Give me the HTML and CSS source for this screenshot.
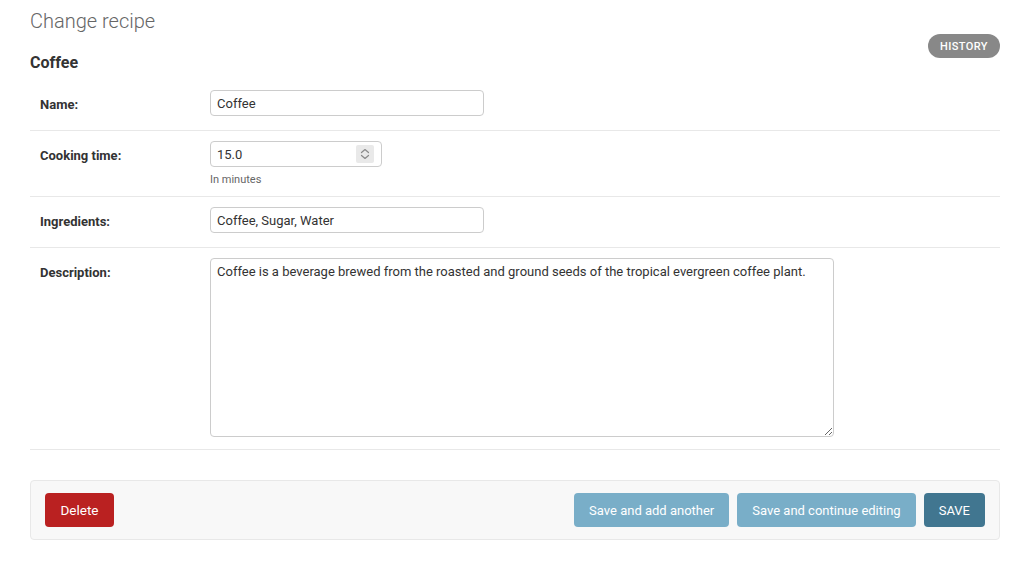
FILE: index.html
```html
<!DOCTYPE html>
<html lang="en">
<head>
<meta charset="utf-8">
<title>Change recipe</title>
<link rel="stylesheet" href="styles.css">
</head>
<body>
<div class="content">
  <h1 class="title">Change recipe</h1>
  <ul class="object-tools"><li><a href="#" class="historylink">History</a></li></ul>
  <h2 class="subtitle">Coffee</h2>
  <form class="form">
    <div class="fieldset">
      <div class="form-row">
        <label class="label">Name:</label>
        <div class="field">
          <input class="text-input" type="text" value="Coffee">
        </div>
      </div>
      <div class="form-row">
        <label class="label">Cooking time:</label>
        <div class="field">
          <div class="number-wrap">
            <input class="number-input" type="number" value="15.0" step="0.1">
            <span class="spinner" aria-hidden="true">
              <svg width="18" height="18" viewBox="0 0 18 18">
                <path d="M5.5 7.5 L9 4.5 L12.5 7.5" fill="none" stroke="#8a8a8a" stroke-width="1.2" stroke-linecap="round" stroke-linejoin="round"/>
                <path d="M5.5 10.5 L9 13.5 L12.5 10.5" fill="none" stroke="#8a8a8a" stroke-width="1.2" stroke-linecap="round" stroke-linejoin="round"/>
              </svg>
            </span>
          </div>
          <div class="help">In minutes</div>
        </div>
      </div>
      <div class="form-row">
        <label class="label">Ingredients:</label>
        <div class="field">
          <input class="text-input" type="text" value="Coffee, Sugar, Water">
        </div>
      </div>
      <div class="form-row">
        <label class="label">Description:</label>
        <div class="field">
          <textarea class="textarea">Coffee is a beverage brewed from the roasted and ground seeds of the tropical evergreen coffee plant.</textarea>
        </div>
      </div>
    </div>
    <div class="submit-row">
      <a href="#" class="btn btn-delete">Delete</a>
      <div class="spacer"></div>
      <button type="button" class="btn btn-light">Save and add another</button>
      <button type="button" class="btn btn-light">Save and continue editing</button>
      <button type="button" class="btn btn-default">SAVE</button>
    </div>
  </form>
</div>
</body>
</html>
```
FILE: styles.css
```css
html, body {
  margin: 0;
  padding: 0;
  background: #fff;
}
body {
  font-family: Roboto, "Liberation Sans", Arial, sans-serif;
  font-size: 13px;
  color: #333;
}
.content {
  position: relative;
  padding: 9px 26px 20px 30px;
}
.title {
  margin: 0;
  font-size: 20px;
  line-height: 24px;
  font-weight: 300;
  color: #666;
}
.object-tools {
  position: absolute;
  top: 34px;
  right: 26px;
  margin: 0;
  padding: 0;
  list-style: none;
}
.historylink {
  display: block;
  height: 24px;
  line-height: 25px;
  padding: 0 12px;
  border-radius: 12px;
  background: #888;
  color: #fff;
  font-size: 11px;
  font-weight: 500;
  letter-spacing: 0.4px;
  text-transform: uppercase;
  text-decoration: none;
}
.subtitle {
  margin: 20px 0 0;
  font-size: 16px;
  line-height: 19px;
  font-weight: 700;
  color: #333;
  height: 27px;
}
.fieldset {
  margin: 0;
}
.form-row {
  display: flex;
  padding: 10px;
  border-bottom: 1px solid #e8e8e8;
}
.label {
  width: 170px;
  flex: none;
  font-weight: 700;
  line-height: 26px;
  padding-top: 2px;
  color: #333;
}
.field {
  display: flex;
  flex-direction: column;
  align-items: flex-start;
}
.text-input, .number-input, .textarea {
  box-sizing: border-box;
  font-family: Roboto, "Liberation Sans", Arial, sans-serif;
  font-size: 13px;
  color: #333;
  border: 1px solid #ccc;
  border-radius: 4px;
  padding: 5px 6px;
  margin: 0;
  background: #fff;
}
.text-input {
  width: 274px;
  height: 26px;
  margin-bottom: 4px;
}
.number-wrap {
  position: relative;
  width: 172px;
  height: 26px;
}
.number-input {
  display: block;
  width: 172px;
  height: 26px;
  -moz-appearance: textfield;
}
.number-input::-webkit-inner-spin-button,
.number-input::-webkit-outer-spin-button {
  -webkit-appearance: none;
  margin: 0;
}
.spinner {
  position: absolute;
  top: 4px;
  right: 8px;
  width: 18px;
  height: 18px;
  background: #e9e9e9;
  border-radius: 2px;
}
.spinner svg {
  display: block;
}
.help {
  margin-top: 6px;
  font-size: 11px;
  line-height: 13px;
  color: #666;
}
.textarea {
  display: block;
  width: 624px;
  height: 179px;
  line-height: 15px;
  margin-bottom: 2px;
  resize: both;
}
.submit-row {
  display: flex;
  align-items: center;
  gap: 8px;
  margin-top: 30px;
  padding: 12px 14px;
  background: #f8f8f8;
  border: 1px solid #e8e8e8;
  border-radius: 4px;
}
.spacer {
  flex: 1;
}
.btn {
  box-sizing: border-box;
  display: inline-flex;
  align-items: center;
  height: 34px;
  padding: 0 15px;
  border: none;
  border-radius: 4px;
  font-family: Roboto, "Liberation Sans", Arial, sans-serif;
  font-size: 13px;
  color: #fff;
  text-decoration: none;
  cursor: pointer;
}
.btn-delete {
  background: #ba2121;
  padding: 0 15px;
  font-size: 13.5px;
  width: 69px;
  justify-content: center;
}
.btn-light {
  background: #79aec8;
}
.btn-default {
  background: #417690;
}
```
